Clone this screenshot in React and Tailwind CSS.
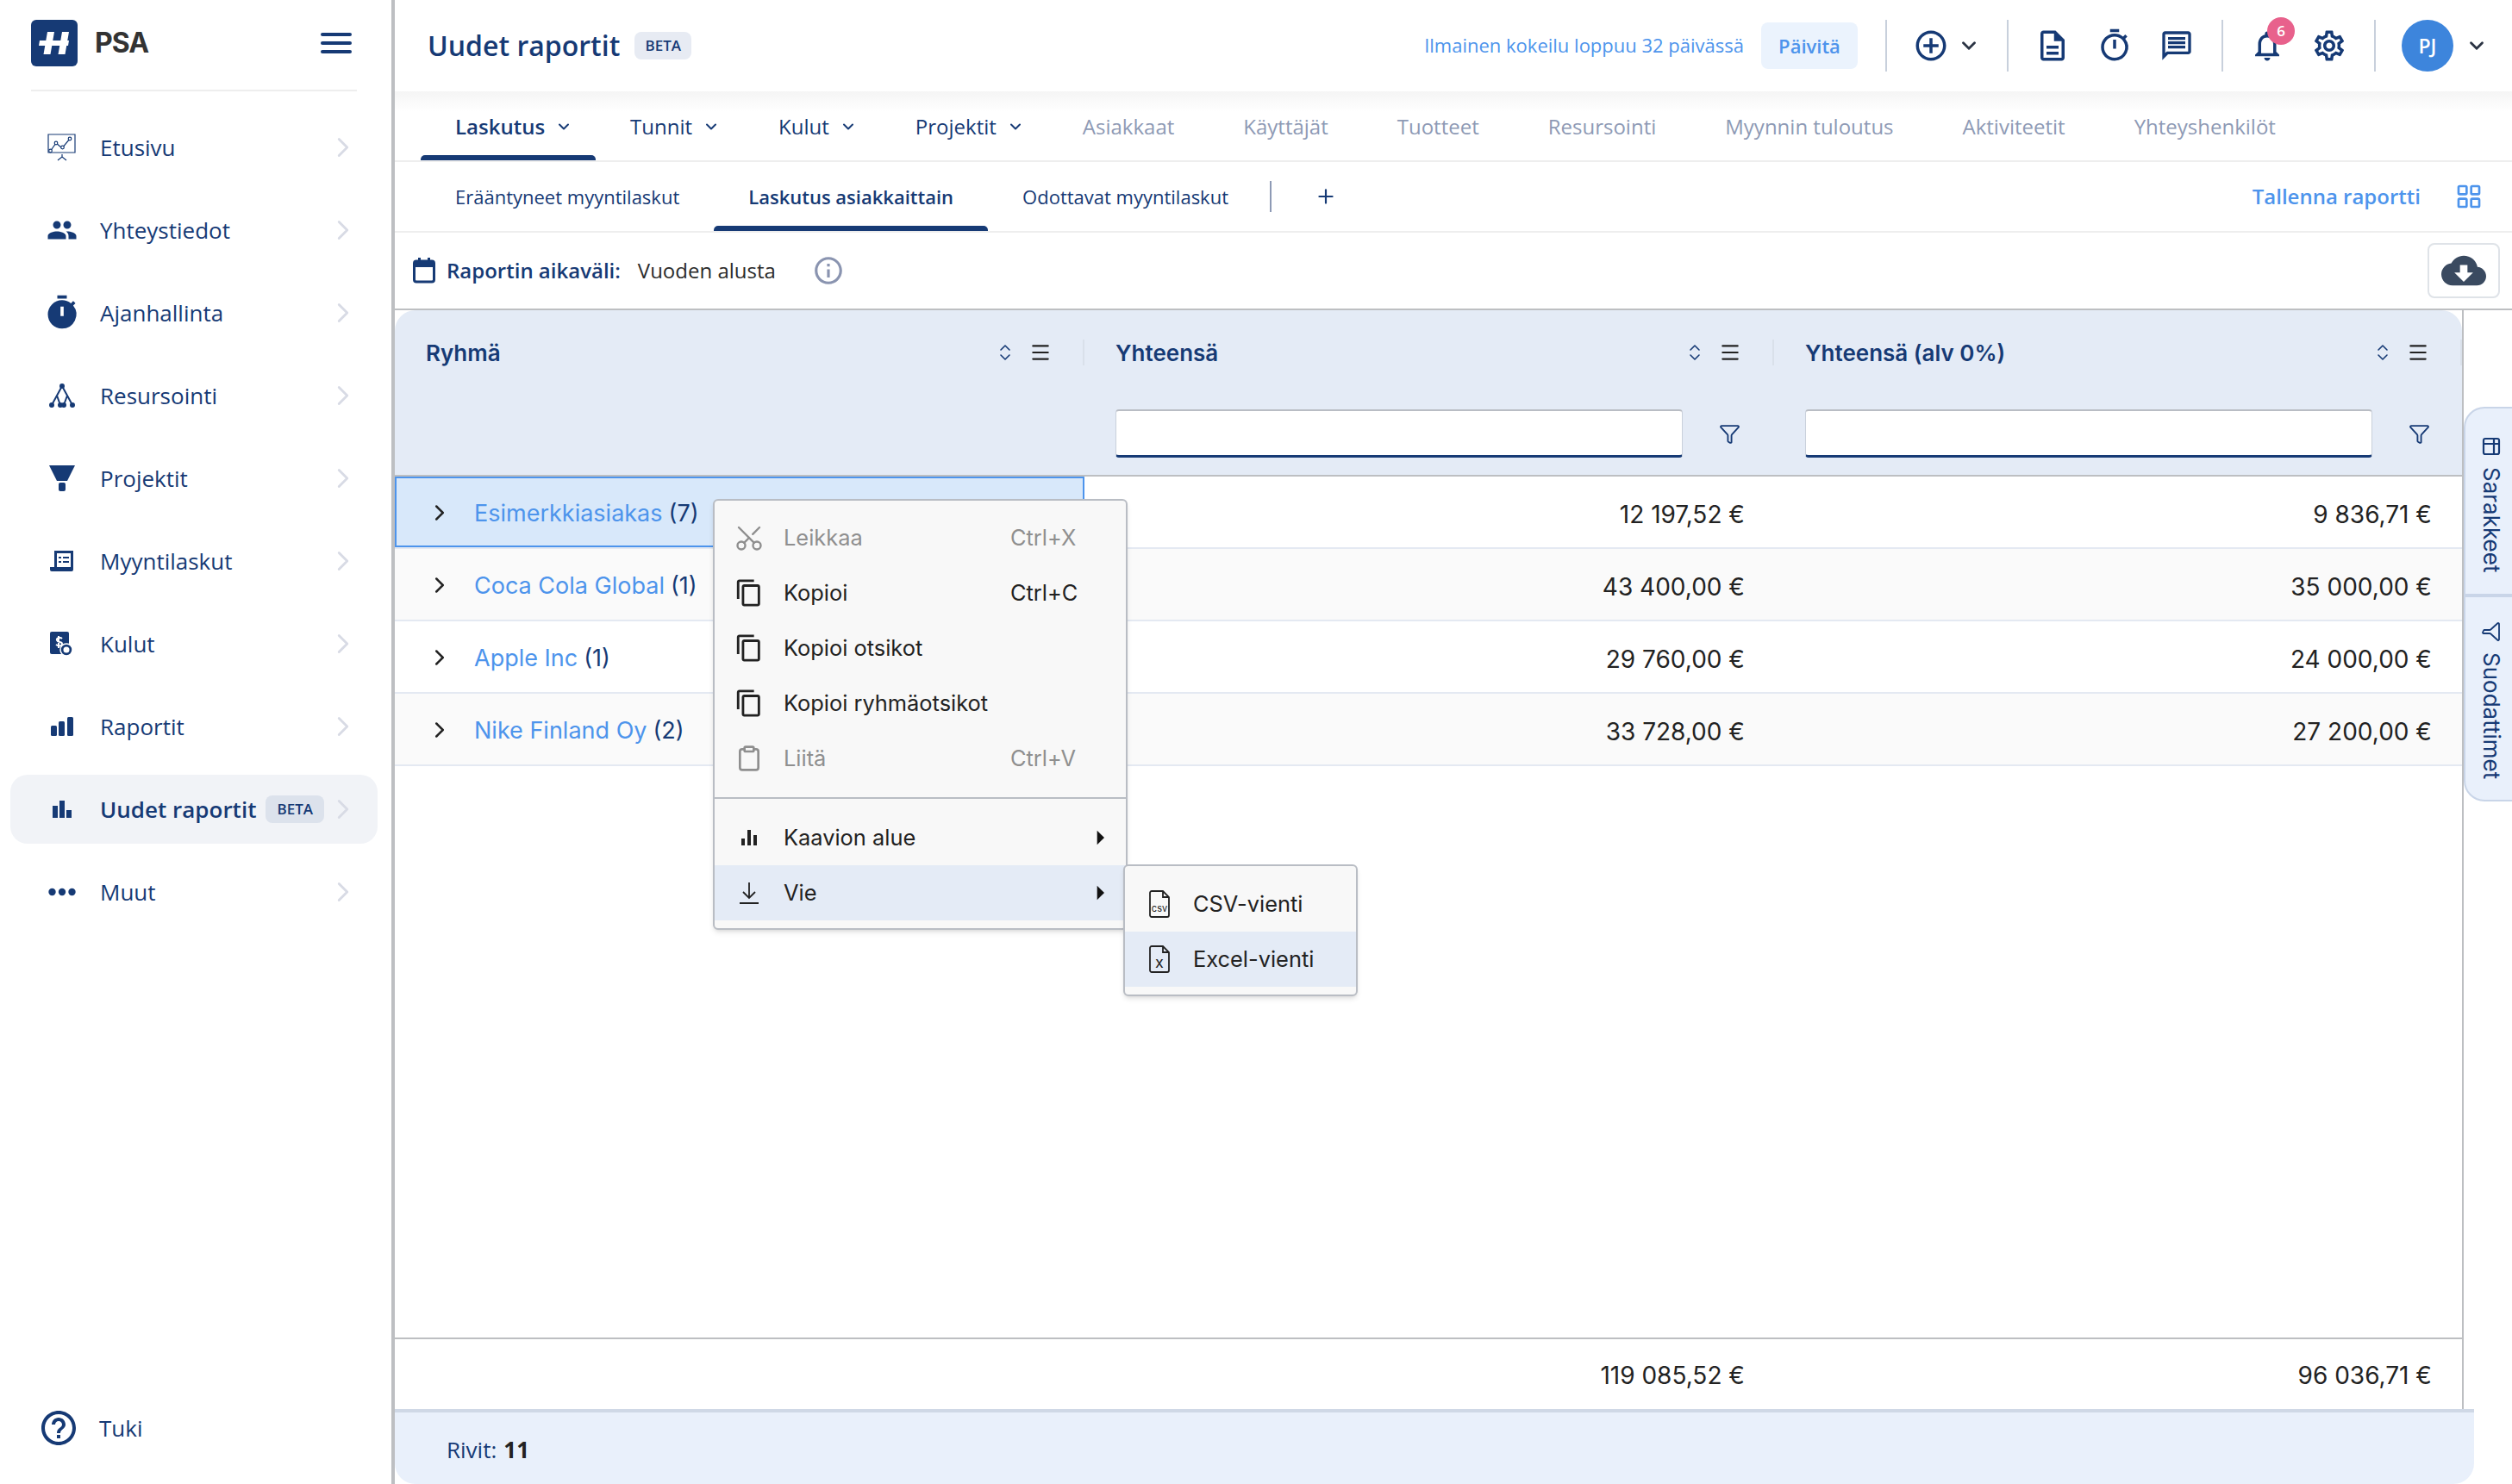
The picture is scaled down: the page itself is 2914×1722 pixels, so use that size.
import React from 'react';
import { ChevronRight, ChevronDown, ChevronsUpDown, Menu, Funnel, Scissors, Clipboard, Plus, LayoutGrid, Table2 } from 'lucide-react';
import {
  MdPeople, MdTimer, MdHelpOutline, MdCloudDownload, MdInfoOutline, MdNotificationsNone, MdOutlineSettings,
  MdAddCircleOutline, MdOutlineDescription, MdOutlineTimer, MdOutlineMessage, MdArrowRight, MdOutlineContentCopy,
} from 'react-icons/md';

const Logo = () => (
  <svg width="54" height="54" viewBox="0 0 54 54" className="shrink-0">
    <rect width="54" height="54" rx="6" fill="#163a75" />
    <path d="M19 14h8l-4.500 26h-8zM36 14h8l-4.500 26h-8z" fill="#fff" />
    <path d="M10 24h34l-1 6H9z" fill="#fff" />
  </svg>
);

const ChartBoard = () => (
  <svg width="34" height="32" viewBox="0 0 34 32" fill="none" stroke="#163a75" strokeWidth="1.200">
    <path d="M1 1h31v21H1zM12 31l5-4 5 4M17 24v4" />
    <path d="M3 21l7-10 7 6 9-11" />
    <circle cx="3.500" cy="20" r="1.800" fill="#fff" />
    <circle cx="10" cy="11" r="1.800" fill="#fff" />
    <circle cx="17.500" cy="16" r="1.800" fill="#fff" />
    <circle cx="26" cy="6" r="1.800" fill="#fff" />
  </svg>
);

const TreeIcon = () => (
  <svg width="30" height="28" viewBox="0 0 30 28" fill="none" stroke="#163a75" strokeWidth="2">
    <path d="M15 3L3 25M15 3l12 22M9 14l4 11M21 14l-4 11" />
    <circle cx="15" cy="3" r="2" fill="#163a75" />
    <circle cx="3" cy="25" r="2" fill="#163a75" />
    <circle cx="13" cy="25" r="2" fill="#163a75" />
    <circle cx="17" cy="25" r="2" fill="#163a75" />
    <circle cx="27" cy="25" r="2" fill="#163a75" />
  </svg>
);

const ProjectIcon = () => (
  <svg width="30" height="30" viewBox="0 0 30 30" fill="#163a75">
    <path d="M0 0h30l-9 18H9z" />
    <rect x="11" y="20" width="8" height="10" rx="2" />
  </svg>
);

const InvoiceIcon = () => (
  <svg width="28" height="26" viewBox="0 0 28 26" fill="none">
    <path d="M5 1h22v22a2 2 0 0 1-2 2H2a2 2 0 0 1-2-2v-3h5z" fill="#163a75" />
    <path d="M8 4h16v16H8z" fill="#fff" />
    <path d="M10 8h3v2h-3zM15 8h7v2h-7zM10 13h3v2h-3zM15 13h7v2h-7zM9 20h16v3H9z" fill="#163a75" />
  </svg>
);

const ExpenseIcon = () => (
  <svg width="30" height="30" viewBox="0 0 30 30" fill="none">
    <rect x="1" y="1" width="22" height="26" rx="2" fill="#163a75" />
    <path d="M11 6v14M15 9c-2-2-7-1-6 2s6 1 6 4-4 3-7 1" stroke="#fff" strokeWidth="2" />
    <circle cx="20" cy="22" r="7" fill="#163a75" stroke="#fff" strokeWidth="1.500" />
    <circle cx="20" cy="22" r="3.500" fill="#fff" />
  </svg>
);

const RisingBars = () => (
  <svg width="26" height="22" viewBox="0 0 26 22" fill="#163a75">
    <rect x="0" y="10" width="7" height="12" rx="1.500" />
    <rect x="9" y="5" width="7" height="17" rx="1.500" />
    <rect x="19" y="0" width="7" height="22" rx="1.500" />
  </svg>
);

const ChartBars = () => (
  <svg width="22" height="20" viewBox="0 0 22 20" fill="#163a75">
    <rect x="0" y="6" width="6" height="14" />
    <rect x="8" y="0" width="6" height="20" />
    <rect x="16" y="11" width="6" height="9" />
  </svg>
);

const Dots = () => (
  <svg width="32" height="10" viewBox="0 0 32 10" fill="#163a75">
    <circle cx="4.500" cy="5" r="4.200" />
    <circle cx="16" cy="5" r="4.200" />
    <circle cx="27.500" cy="5" r="4.200" />
  </svg>
);

const CalendarIcon = () => (
  <svg width="26" height="30" viewBox="0 0 26 30" fill="none" className="shrink-0">
    <rect x="1.500" y="4" width="23" height="24" rx="2.500" stroke="#163a75" strokeWidth="3" />
    <path d="M1.500 4h23v7h-23zM6 0h3v5H6zM17 0h3v5h-3z" fill="#163a75" />
  </svg>
);

const MenuBars = () => (
  <svg width="18" height="18" viewBox="0 0 18 18" fill="#222">
    <rect x="0" y="10" width="4" height="8" />
    <rect x="7" y="0" width="4" height="18" />
    <rect x="14" y="6" width="4" height="12" />
  </svg>
);

const DownloadLine = () => (
  <svg width="24" height="28" viewBox="0 0 24 28" fill="none" stroke="#222" strokeWidth="1.800">
    <path d="M12 2v18M5 13l7 7 7-7M1 26h22" />
  </svg>
);

const FileIcon = ({ children }) => (
  <svg width="26" height="32" viewBox="0 0 26 32" fill="none" stroke="#222" strokeWidth="1.800">
    <path d="M2 3a2 2 0 0 1 2-2h13l7 7v21a2 2 0 0 1-2 2H4a2 2 0 0 1-2-2zM17 1v7h7" />
    {children}
  </svg>
);

const navItems = [
  { label: 'Etusivu', icon: <ChartBoard /> },
  { label: 'Yhteystiedot', icon: <MdPeople size={36} color="#163a75" /> },
  { label: 'Ajanhallinta', icon: <MdTimer size={44} color="#163a75" /> },
  { label: 'Resursointi', icon: <TreeIcon /> },
  { label: 'Projektit', icon: <ProjectIcon /> },
  { label: 'Myyntilaskut', icon: <InvoiceIcon /> },
  { label: 'Kulut', icon: <ExpenseIcon /> },
  { label: 'Raportit', icon: <RisingBars /> },
  { label: 'Uudet raportit', icon: <ChartBars />, active: true },
  { label: 'Muut', icon: <Dots /> },
];

const topTabs = [
  { label: 'Laskutus', menu: true, active: true },
  { label: 'Tunnit', menu: true },
  { label: 'Kulut', menu: true },
  { label: 'Projektit', menu: true },
  { label: 'Asiakkaat' },
  { label: 'Käyttäjät' },
  { label: 'Tuotteet' },
  { label: 'Resursointi' },
  { label: 'Myynnin tuloutus' },
  { label: 'Aktiviteetit' },
  { label: 'Yhteyshenkilöt' },
];

const rows = [
  { name: 'Esimerkkiasiakas', count: '(7)', a: '12 197,52 €', b: '9 836,71 €', selected: true },
  { name: 'Coca Cola Global', count: '(1)', a: '43 400,00 €', b: '35 000,00 €' },
  { name: 'Apple Inc', count: '(1)', a: '29 760,00 €', b: '24 000,00 €' },
  { name: 'Nike Finland Oy', count: '(2)', a: '33 728,00 €', b: '27 200,00 €' },
];

const menuItems = [
  { label: 'Leikkaa', short: 'Ctrl+X', icon: <Scissors size={36} strokeWidth={1.6} className="-rotate-90" />, disabled: true },
  { label: 'Kopioi', short: 'Ctrl+C', icon: <MdOutlineContentCopy size={34} /> },
  { label: 'Kopioi otsikot', icon: <MdOutlineContentCopy size={34} /> },
  { label: 'Kopioi ryhmäotsikot', icon: <MdOutlineContentCopy size={34} /> },
  { label: 'Liitä', short: 'Ctrl+V', icon: <Clipboard size={32} strokeWidth={2} />, disabled: true },
];

const HeaderCell = ({ title, width, filter }) => (
  <div className={`${width} relative shrink-0 h-full`}>
    <div className="flex items-center h-[98px] pl-[36px]">
      <span className="text-[26px] font-semibold text-[#163a75]">{title}</span>
      <ChevronsUpDown size={24} strokeWidth={1.6} className="ml-auto text-[#163a75]" />
      <Menu size={26} strokeWidth={2} className="ml-[16px] mr-[36px] text-[#222]" />
      <div className="w-[2px] h-[30px] bg-[#d9e0ea]" />
    </div>
    {filter && (
      <div className="flex items-center pl-[36px] mt-[17px]">
        <div className="w-[658px] h-[56px] bg-white rounded-[4px] border-t-2 border-x border-b-[3px] border-t-[#b9bdc4] border-x-[#c9d0db] border-b-[#163a75]" />
        <Funnel size={25} strokeWidth={1.8} className="ml-[42px] text-[#163a75]" />
      </div>
    )}
  </div>
);

export default function App() {
  return (
    <div className="relative flex w-[2914px] h-[1722px] overflow-hidden bg-white font-['Open_Sans',sans-serif] text-[#163a75]">
      <aside className="w-[458px] shrink-0 h-full flex flex-col border-r-4 border-[#bdbfc2]">
        <div className="flex items-center ml-[36px] mr-[40px] h-[106px] pb-[4px] border-b-2 border-[#eeeeee]">
          <Logo />
          <span className="ml-[20px] text-[32px] font-bold text-[#333] font-['Inter',sans-serif] tracking-[-1px]">PSA</span>
          <div className="ml-auto mr-[6px] w-[36px] flex flex-col gap-[6px]">
            <div className="h-[4px] rounded bg-[#163a75]" />
            <div className="h-[4px] rounded bg-[#163a75]" />
            <div className="h-[4px] rounded bg-[#163a75]" />
          </div>
        </div>
        <nav className="flex flex-col gap-[16px] pt-[25px] pl-[12px] pr-[16px]">
          {navItems.map(item => (
            <div key={item.label} className={`flex items-center h-[80px] rounded-[20px] ${item.active ? 'bg-[#f1f3f7]' : ''}`}>
              <div className="w-[112px] pl-[16px] flex justify-center shrink-0 pr-[8px]">
                <div className="w-[32px] flex justify-center items-center [&>svg]:shrink-0">{item.icon}</div>
              </div>
              <span className={`-ml-[8px] mt-[1px] text-[26px] ${item.active ? 'font-semibold' : ''}`}>{item.label}</span>
              {item.active && <span className="ml-[11px] px-[13px] h-[32px] flex items-center rounded-[8px] bg-[#dce2ec] text-[17px] font-semibold">BETA</span>}
              <ChevronRight size={38} strokeWidth={1.8} className="ml-auto mr-[21px] text-[#d8dbe5] shrink-0" />
            </div>
          ))}
        </nav>
        <div className="mt-auto flex items-center pl-[44px] pb-[41px]">
          <MdHelpOutline size={48} />
          <span className="ml-[23px] text-[26px]">Tuki</span>
        </div>
      </aside>

      <main className="flex-1 min-w-0 flex flex-col">
        <header className="h-[106px] shrink-0 flex items-center pl-[38px]">
          <h1 className="text-[32px] font-semibold leading-none">Uudet raportit</h1>
          <span className="ml-[17px] h-[32px] w-[66px] flex items-center justify-center rounded-[8px] bg-[#e7ebf3] text-[17px] font-semibold">BETA</span>
          <span className="ml-auto -mt-[2px] text-[22px] text-[#4d94ec]">Ilmainen kokeilu loppuu 32 päivässä</span>
          <button className="ml-[20px] w-[112px] h-[54px] rounded-[8px] bg-[#ebf3fd] text-[22px] font-semibold text-[#4d94ec]">Päivitä</button>
          <div className="ml-[32px] w-[2px] h-[60px] bg-[#c8d0dc]" />
          <MdAddCircleOutline size={42} className="ml-[30px]" />
          <ChevronDown size={26} strokeWidth={2.6} className="ml-[10px] text-[#2b3444]" />
          <div className="ml-[31px] w-[2px] h-[60px] bg-[#c8d0dc]" />
          <MdOutlineDescription size={42} className="ml-[30px]" />
          <MdOutlineTimer size={42} className="ml-[30px]" />
          <MdOutlineMessage size={40} className="ml-[31px]" />
          <div className="ml-[32px] w-[2px] h-[60px] bg-[#c8d0dc]" />
          <div className="relative ml-[30px]">
            <MdNotificationsNone size={42} />
            <span className="absolute -top-[12px] left-[21px] w-[32px] h-[32px] rounded-full bg-[#e8618c] text-white text-[17px] font-semibold flex items-center justify-center">6</span>
          </div>
          <MdOutlineSettings size={42} className="ml-[30px]" />
          <div className="ml-[31px] w-[2px] h-[60px] bg-[#c8d0dc]" />
          <div className="ml-[30px] w-[60px] h-[60px] rounded-full bg-[#3d85dc] text-white text-[23px] font-semibold flex items-center justify-center">PJ</div>
          <ChevronDown size={26} strokeWidth={2.6} className="ml-[14px] mr-[28px] text-[#2b3444]" />
        </header>

        <div className="h-[82px] shrink-0 flex items-center pl-[30px] border-b-2 border-[#eeeeee] bg-gradient-to-b from-[#f5f5f5] to-white to-30%">
          {topTabs.map(tab => (
            <div key={tab.label} className={`relative h-full flex items-center px-[40px] pt-[2px] text-[24px] ${tab.active ? 'font-semibold' : ''} ${tab.menu ? '' : 'text-[#8e9ab5]'}`}>
              {tab.label}
              {tab.menu && <ChevronDown size={20} strokeWidth={2.4} className={`ml-[12px] ${tab.active ? '-mr-[13px]' : '-mr-[12px]'}`} />}
              {tab.active && <div className="absolute left-0 right-0 bottom-0 h-[6px] rounded-t-[5px] bg-[#163a75]" />}
            </div>
          ))}
        </div>

        <div className="h-[82px] shrink-0 flex items-center pl-[30px] border-b-2 border-[#eeeeee] text-[22px]">
          <div className="h-full flex items-center px-[40px]">Erääntyneet myyntilaskut</div>
          <div className="relative h-full flex items-center px-[40px] font-semibold">
            Laskutus asiakkaittain
            <div className="absolute left-0 right-0 bottom-0 h-[6px] rounded-t-[5px] bg-[#163a75]" />
          </div>
          <div className="h-full flex items-center px-[40px]">Odottavat myyntilaskut</div>
          <div className="ml-[8px] w-[2px] h-[36px] bg-[#8e9ab5]" />
          <Plus size={26} strokeWidth={2} className="ml-[50px]" />
          <span className="ml-auto text-[24px] font-semibold text-[#4d94ec]">Tallenna raportti</span>
          <LayoutGrid size={32} strokeWidth={2} className="ml-[40px] mr-[34px] text-[#4d94ec]" />
        </div>

        <div className="h-[90px] shrink-0 flex items-center pl-[21px] border-b-2 border-[#bdbfc2] text-[24px]">
          <CalendarIcon />
          <span className="ml-[13px] font-semibold">Raportin aikaväli:</span>
          <span className="ml-[20px] text-[#2b2b2b]">Vuoden alusta</span>
          <MdInfoOutline size={38} className="ml-[42px] text-[#8a94b0]" />
          <button className="ml-auto mr-[14px] w-[84px] h-[64px] rounded-[8px] border-2 border-[#dfe3e8] flex items-center justify-center text-[#3a4a60]">
            <MdCloudDownload size={52} />
          </button>
        </div>

        <div className="flex-1 min-h-0 w-[2400px] flex flex-col border-r-2 border-[#bdbfc2] font-['Inter',sans-serif]">
          <div className="h-[193px] shrink-0 flex bg-[#e4ebf6] rounded-t-[24px] border-b-2 border-[#bdbfc2]">
            <HeaderCell title="Ryhmä" width="w-[800px]" />
            <HeaderCell title="Yhteensä" width="w-[800px]" filter />
            <HeaderCell title="Yhteensä (alv 0%)" width="w-[798px]" filter />
          </div>
          <div className="flex-1 min-h-0 flex flex-col">
            {rows.map((row, i) => (
              <div key={row.name} className={`h-[84px] shrink-0 flex items-center border-b-2 border-[#e4e9f2] text-[28px] text-[#222] ${i % 2 ? 'bg-[#fafafa]' : 'bg-white'}`}>
                <div className={`w-[800px] h-full flex items-center text-[27px] ${row.selected ? 'pl-[35px] bg-[#d8e8fa] border-2 border-[#4d94ec]' : 'pl-[37px]'}`}>
                  <ChevronRight size={30} strokeWidth={2} className="text-[#222] mt-[2px]" />
                  <span className="ml-[25px] mt-[5px] text-[#4d94ec]">{row.name}</span>
                  <span className="ml-[7px] mt-[5px] text-[#163a75]">{row.count}</span>
                </div>
                <div className="w-[766px] text-right mt-[5px]">{row.a}</div>
                <div className="w-[797px] text-right mt-[5px]">{row.b}</div>
              </div>
            ))}
          </div>
          <div className="h-[83px] shrink-0 flex items-center border-t-2 border-[#bdbfc2] text-[28px] text-[#222]">
            <div className="w-[1566px] text-right mt-[2px]">119 085,52 €</div>
            <div className="w-[797px] text-right mt-[2px]">96 036,71 €</div>
          </div>
        </div>

        <div className="h-[87px] shrink-0 w-[2412px] flex items-center pl-[60px] pt-[4px] bg-[#e9f0fb] border-t-4 border-[#cfd8e6] rounded-b-[24px] text-[26px]">
          Rivit:<b className="ml-[8px] text-[#222] font-bold">11</b>
        </div>
      </main>

      <div className="absolute left-[2858px] top-[472px] w-[56px] h-[458px] flex flex-col bg-[#e9f0fb] border-l-2 border-y-2 border-[#c9d5e8] rounded-l-[24px] pl-[6px] text-[26px] text-[#163a75] font-['Inter',sans-serif]">
        <div className="h-[219px] -ml-[6px] pl-[6px] flex flex-col items-center pt-[32px] border-b-4 border-[#c9d5e8]">
          <Table2 size={24} strokeWidth={2.2} className="rotate-90" />
          <span className="mt-[12px] [writing-mode:vertical-rl]">Sarakkeet</span>
        </div>
        <div className="flex flex-col items-center pt-[28px]">
          <Funnel size={24} strokeWidth={1.8} className="rotate-90" />
          <span className="mt-[12px] [writing-mode:vertical-rl]">Suodattimet</span>
        </div>
      </div>

      <div className="absolute left-[827px] top-[579px] w-[481px] h-[500px] bg-[#f8f8f8] border-2 border-[#b9bdc4] rounded-[6px] shadow-md pt-[11px] text-[25.4px] text-[#222] font-['Inter',sans-serif]">
        {menuItems.map(item => (
          <div key={item.label} className={`flex items-center h-[64px] ${item.disabled ? 'text-[#8f8f8f]' : ''}`}>
            <div className="w-[80px] flex justify-center shrink-0">{item.icon}</div>
            <span>{item.label}</span>
            {item.short && <span className="absolute left-[343px]">{item.short}</span>}
          </div>
        ))}
        <div className="h-[2px] bg-[#b9bdc4] mt-[13px] mb-[13px]" />
        <div className="flex items-center h-[64px] mt-[7px]">
          <div className="w-[80px] flex justify-center shrink-0"><MenuBars /></div>
          <span>Kaavion alue</span>
          <MdArrowRight size={40} className="ml-auto mr-[10px] text-[#111]" />
        </div>
        <div className="flex items-center h-[64px] bg-[#e4ebf6]">
          <div className="w-[80px] flex justify-center shrink-0"><DownloadLine /></div>
          <span>Vie</span>
          <MdArrowRight size={40} className="ml-auto mr-[10px] text-[#111]" />
        </div>
      </div>

      <div className="absolute left-[1303px] top-[1003px] w-[272px] h-[153px] bg-[#f8f8f8] border-2 border-[#b9bdc4] rounded-[6px] shadow-md pt-[12px] text-[25.4px] text-[#222] font-['Inter',sans-serif]">
        <div className="flex items-center h-[64px]">
          <div className="w-[79px] flex justify-center shrink-0">
            <FileIcon><text x="13" y="25" textAnchor="middle" fontSize="11" stroke="none" fill="#222">csv</text></FileIcon>
          </div>
          <span>CSV-vienti</span>
        </div>
        <div className="flex items-center h-[64px] bg-[#e4ebf6]">
          <div className="w-[79px] flex justify-center shrink-0">
            <FileIcon><text x="13" y="26" textAnchor="middle" fontSize="18" stroke="none" fill="#222">x</text></FileIcon>
          </div>
          <span>Excel-vienti</span>
        </div>
      </div>
    </div>
  );
}
